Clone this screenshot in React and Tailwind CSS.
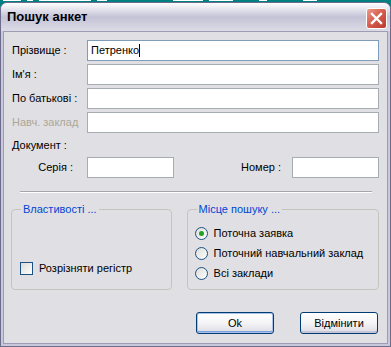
import React from 'react';

const font = { fontFamily: '"Liberation Sans", Arial, sans-serif' };

const TextField = ({ value, focused, className = '' }) => (
  <div
    className={`h-[21px] bg-white border flex items-center pl-[3px] text-[11px] text-black ${
      focused ? 'border-[#7f9db9]' : 'border-[#a5acb2]'
    } ${className}`}
  >
    {value}
    {focused && <span className="w-px h-[13px] bg-black" />}
  </div>
);

const Row = ({ label, value, focused, disabled }) => (
  <div className="flex items-center h-[21px]">
    <div className={`w-[75px] text-[11px] ${disabled ? 'text-[#aca899]' : 'text-black'}`}>{label}</div>
    <TextField value={value} focused={focused} className="flex-1" />
  </div>
);

const Radio = ({ label, checked }) => (
  <div className="flex items-center h-[13px] gap-[6px]">
    <div className="w-[13px] h-[13px] rounded-full border border-[#1c5180] bg-gradient-to-br from-[#dcdcd7] to-white flex items-center justify-center">
      {checked && <div className="w-[5px] h-[5px] rounded-full bg-[#21a121]" />}
    </div>
    <span className="text-[11px] text-black">{label}</span>
  </div>
);

const GroupBox = ({ title, className = '', children }) => (
  <div className={`relative h-[81px] border border-[#c6c5bd] rounded-[4px] ${className}`}>
    <span className="absolute left-[9px] top-[-8px] px-[2px] bg-[#e0dfe3] text-[11px] text-[#0046d5] leading-[14px]">
      {title}
    </span>
    {children}
  </div>
);

const Button = ({ children, isDefault }) => (
  <div
    className={`w-[78px] h-[22px] rounded-[3px] border border-[#003c74] bg-gradient-to-b from-white via-[#f4f4f7] to-[#dcdbe3] flex items-center justify-center text-[11px] text-black ${
      isDefault ? 'shadow-[inset_0_0_0_1px_#a9c2ec,inset_0_-1px_0_1px_#7a9fdd]' : 'shadow-[inset_0_-2px_0_0_#c6c5d7]'
    }`}
  >
    {children}
  </div>
);

export default function App() {
  return (
    <div className="w-[391px] h-[347px] bg-[#008080] overflow-hidden" style={font}>
      <div className="h-[2px] flex gap-[6px] pl-[3px]">
        <div className="w-[18px] h-px bg-white" />
        <div className="w-[6px] h-px bg-white" />
        <div className="w-[52px] h-px bg-white" />
        <div className="w-[10px] h-px bg-white" />
        <div className="w-[30px] h-px bg-white ml-[60px]" />
        <div className="w-[24px] h-px bg-white" />
        <div className="w-[8px] h-px bg-white ml-[20px]" />
        <div className="w-[14px] h-px bg-white ml-[30px]" />
      </div>
      <div className="w-[391px] h-[345px] rounded-t-[7px] border border-[#6d6c8c] bg-[#c9c8da] flex flex-col">
        {/* Title bar */}
        <div className="h-[28px] rounded-t-[6px] bg-gradient-to-b from-white via-[#c4c3d6] to-[#dcdce6] flex items-center justify-between pl-[6px] pr-[3px]">
          <span className="text-[13px] font-bold text-black">Пошук анкет</span>
          <div className="w-[21px] h-[21px] mt-[2px] rounded-[3px] border border-white bg-gradient-to-br from-[#eb9a8c] via-[#d65a4a] to-[#b83a2e] flex items-center justify-center">
            <svg width="13" height="13" viewBox="0 0 13 13">
              <path d="M2 2 L11 11 M11 2 L2 11" stroke="white" strokeWidth="2.4" strokeLinecap="square" />
            </svg>
          </div>
        </div>

        {/* Body */}
        <div className="flex-1 mx-[2px] mb-[2px] border border-[#9d9cb4] bg-[#e0dfe3] pt-[8px] pl-[8px] pr-[8px] flex flex-col">
          <div className="flex flex-col gap-[3px]">
            <Row label="Прізвище :" value="Петренко" focused />
            <Row label="Ім'я :" />
            <Row label="По батькові :" />
            <Row label="Навч. заклад" disabled />
          </div>

          <div className="mt-[5px] h-[14px] flex items-center text-[11px] text-black">Документ :</div>

          <div className="mt-[5px] flex items-center h-[21px]">
            <div className="w-[75px] pr-[14px] text-right text-[11px] text-black">Серія :</div>
            <TextField className="w-[87px]" />
            <div className="flex-1 pr-[11px] text-right text-[11px] text-black">Номер :</div>
            <TextField className="w-[87px]" />
          </div>

          <div className="mt-[13px] ml-[8px] mr-[7px] h-[2px] border-t border-[#a7a6aa] border-b border-b-white" />

          <div className="mt-[16px] flex gap-[15px] ml-[-1px]">
            <GroupBox title="Властивості ..." className="w-[161px]">
              <div className="absolute left-[8px] top-[50px] flex items-center gap-[6px]">
                <div className="w-[13px] h-[13px] border border-[#1c5180] bg-gradient-to-br from-[#dcdcd7] to-white" />
                <span className="text-[11px] text-black">Розрізняти регістр</span>
              </div>
            </GroupBox>
            <GroupBox title="Місце пошуку ..." className="w-[193px]">
              <div className="pt-[17px] pl-[7px] flex flex-col gap-[7px]">
                <Radio label="Поточна заявка" checked />
                <Radio label="Поточний навчальний заклад" />
                <Radio label="Всі заклади" />
              </div>
            </GroupBox>
          </div>

          <div className="mt-[22px] flex justify-end gap-[26px] pr-[1px]">
            <Button isDefault>Ok</Button>
            <Button>Відмінити</Button>
          </div>
        </div>
      </div>
    </div>
  );
}
